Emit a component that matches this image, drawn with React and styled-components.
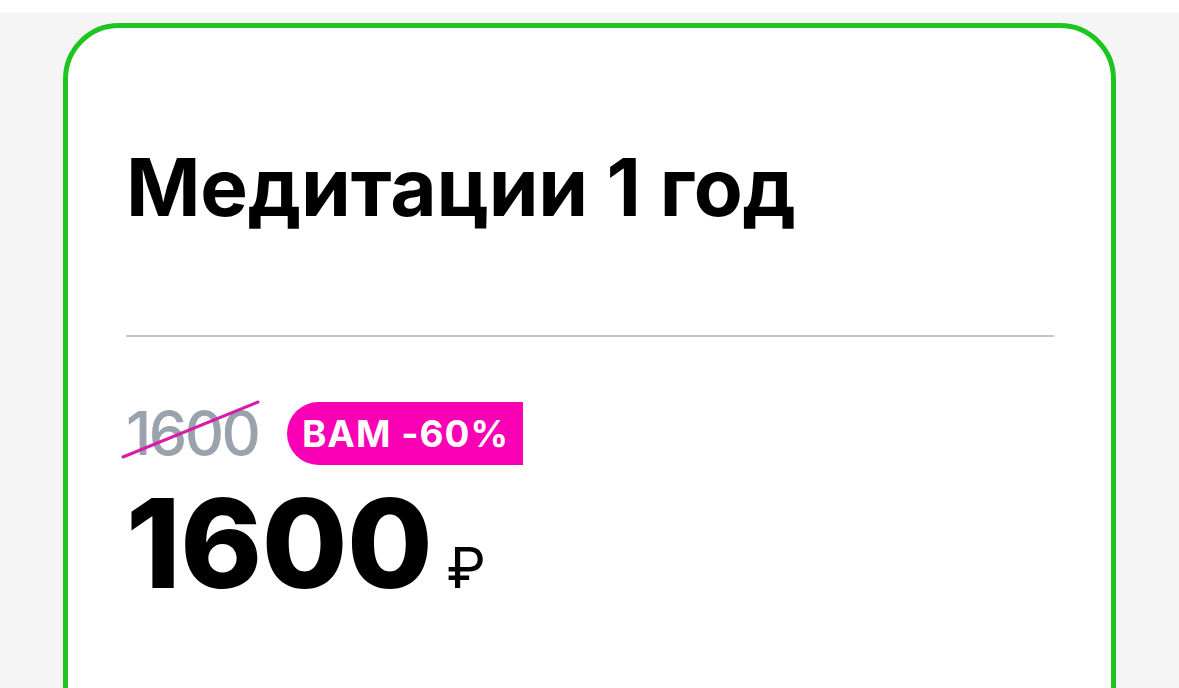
import React from 'react';
import styled, { createGlobalStyle } from 'styled-components';

const GlobalStyle = createGlobalStyle`
  html, body {
    margin: 0;
    padding: 0;
    background: #ffffff;
    overflow: hidden;
  }
  body {
    font-family: Inter, "Noto Sans", "Liberation Sans", sans-serif;
    -webkit-font-smoothing: antialiased;
  }
`;

const Page = styled.div`
  margin-top: 13px;
  height: calc(100vh - 13px);
  background: #f5f5f5;
  padding: 10px 63px 0;
  box-sizing: border-box;
  overflow: hidden;
`;

const Card = styled.div`
  background: #ffffff;
  border: 5px solid #1ec51e;
  border-radius: 56px;
  padding: 111px 57px 200px 58px;
`;

const Title = styled.h1`
  margin: 0;
  font-size: 80px;
  line-height: 96px;
  font-weight: 700;
  letter-spacing: -0.2px;
  color: #000;
`;

const Divider = styled.hr`
  margin: 100px 0 0;
  border: none;
  height: 2px;
  background: #c3c3cc;
`;

const OldRow = styled.div`
  margin-top: 64px;
  display: flex;
  align-items: center;
  gap: 28px;
`;

const OldPrice = styled.span`
  position: relative;
  font-size: 61px;
  line-height: 64px;
  font-weight: 500;
  color: #9aa2ad;
  letter-spacing: -2.5px;
`;

const Strike = styled.svg`
  position: absolute;
  left: -4px;
  top: -2px;
  width: 140px;
  height: 62px;
  overflow: visible;
`;

const Badge = styled.span`
  display: inline-flex;
  align-items: center;
  justify-content: center;
  height: 63px;
  width: 236px;
  box-sizing: border-box;
  padding-left: 2px;
  background: #fa00b4;
  color: #ffffff;
  font-size: 37px;
  font-weight: 700;
  letter-spacing: 1px;
  border-radius: 32px 0 0 32px;
`;

const PriceRow = styled.div`
  display: flex;
  align-items: baseline;
  gap: 14px;
  margin-top: 8px;
`;

const Price = styled.span`
  font-size: 124px;
  line-height: 140px;
  font-weight: 800;
  letter-spacing: -0.5px;
  color: #000;
`;

const Currency = styled.span`
  font-size: 56px;
  font-weight: 400;
  color: #000;
`;

export default function App() {
  return (
    <>
      <GlobalStyle />
      <Page>
        <Card>
          <Title>Медитации 1 год</Title>
          <Divider />
          <OldRow>
            <OldPrice>
              1600
              <Strike viewBox="0 0 140 62">
                <line x1="1" y1="58" x2="136" y2="3" stroke="#d81ba8" strokeWidth="3" strokeLinecap="round" />
              </Strike>
            </OldPrice>
            <Badge>ВАМ -60%</Badge>
          </OldRow>
          <PriceRow>
            <Price>1600</Price>
            <Currency>₽</Currency>
          </PriceRow>
        </Card>
      </Page>
    </>
  );
}
